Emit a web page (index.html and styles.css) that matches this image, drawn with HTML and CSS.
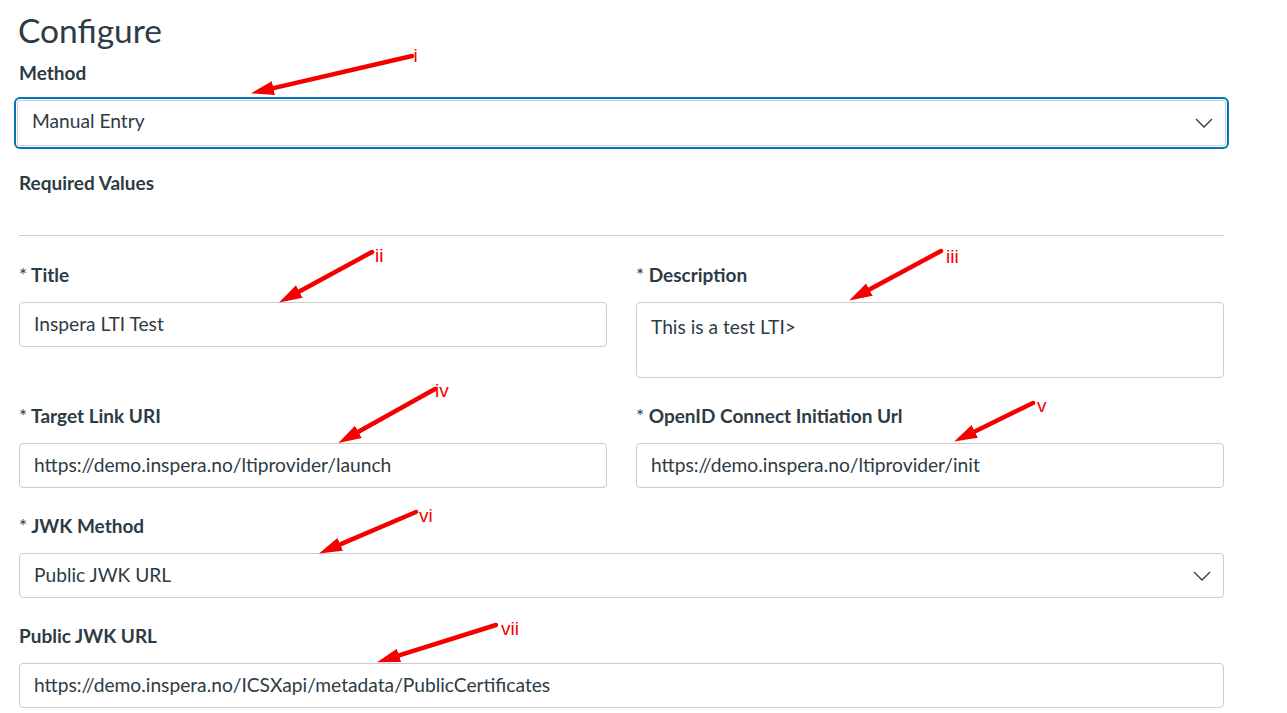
FILE: index.html
```html
<!DOCTYPE html>
<html lang="en">
<head>
<meta charset="utf-8">
<title>Configure</title>
<link rel="stylesheet" href="styles.css">
</head>
<body>
<main class="page">
  <h1 class="title">Configure</h1>

  <div class="field">
    <label class="label">Method</label>
    <div class="select select--focus">
      <span class="value">Manual Entry</span>
      <svg class="chev" viewBox="0 0 18 10" width="18" height="10"><polyline points="1,1 9,9 17,1" fill="none" stroke="#2d3b45" stroke-width="1.3"/></svg>
    </div>
  </div>

  <div class="section-label">Required Values</div>
  <hr class="rule">

  <div class="grid">
    <div class="field">
      <label class="label"><span class="ast">*</span> Title</label>
      <div class="input"><span class="value">Inspera LTI Test</span></div>
    </div>
    <div class="field">
      <label class="label"><span class="ast">*</span> Description</label>
      <div class="input input--area"><span class="value">This is a test LTI&gt;</span></div>
    </div>
    <div class="field">
      <label class="label"><span class="ast">*</span> Target Link URI</label>
      <div class="input"><span class="value">https://demo.inspera.no/ltiprovider/launch</span></div>
    </div>
    <div class="field">
      <label class="label"><span class="ast">*</span> OpenID Connect Initiation Url</label>
      <div class="input"><span class="value">https://demo.inspera.no/ltiprovider/init</span></div>
    </div>
  </div>

  <div class="field">
    <label class="label"><span class="ast">*</span> JWK Method</label>
    <div class="select">
      <span class="value">Public JWK URL</span>
      <svg class="chev" viewBox="0 0 18 10" width="18" height="10"><polyline points="1,1 9,9 17,1" fill="none" stroke="#2d3b45" stroke-width="1.3"/></svg>
    </div>
  </div>

  <div class="field">
    <label class="label">Public JWK URL</label>
    <div class="input"><span class="value">https://demo.inspera.no/ICSXapi/metadata/PublicCertificates</span></div>
  </div>
</main>

<svg class="annotations" width="1287" height="713" viewBox="0 0 1287 713">
  <defs>
    <marker id="head" markerUnits="userSpaceOnUse" markerWidth="26" markerHeight="16" refX="0" refY="7" orient="auto">
      <polygon points="0,0 23,7 0,14" fill="#f40000"/>
    </marker>
  </defs>
  <g stroke="#f40000" stroke-width="4.5" stroke-linecap="round" fill="none" marker-end="url(#head)">
    <path d="M412,56 L273.4,88.1"/>
    <path d="M372,252 L299.3,291.5"/>
    <path d="M941,251 L869.4,289.6"/>
    <path d="M435,389 L358.4,431.8"/>
    <path d="M1033,403 L974.8,431.4"/>
    <path d="M416,512 L340.2,544.4"/>
    <path d="M496,625 L399,655.4"/>
  </g>
  <g class="numerals" fill="#f40000">
    <text x="413.5" y="62">i</text>
    <text x="375" y="262">ii</text>
    <text x="946" y="263">iii</text>
    <text x="435" y="397">iv</text>
    <text x="1037" y="412">v</text>
    <text x="419" y="522">vi</text>
    <text x="501" y="635">vii</text>
  </g>
</svg>
</body>
</html>
```

FILE: styles.css
```css
html, body {
  margin: 0;
  padding: 0;
  background: #ffffff;
}

body {
  font-family: Lato, "Liberation Sans", Arial, sans-serif;
  color: #2d3b45;
  width: 1287px;
  height: 713px;
  overflow: hidden;
  position: relative;
}

.page {
  width: 1205px;
  padding: 0 0 0 19px;
}

.title {
  margin: 0;
  padding-top: 9px;
  margin-left: -1px;
  font-size: 33.5px;
  font-weight: 400;
  line-height: 42px;
  height: 52px;
}

.field {
  margin-bottom: 26px;
}

.label {
  display: block;
  font-size: 19px;
  font-weight: 700;
  line-height: 24px;
  margin-bottom: 15px;
}

.ast {
  font-weight: 400;
}

.input,
.select {
  box-sizing: border-box;
  height: 45px;
  border: 1px solid #c7cdd1;
  border-radius: 4px;
  padding: 0 14px 3px 14px;
  display: flex;
  align-items: center;
  font-size: 19.2px;
  background: #fff;
}

.input--area {
  height: 76px;
  align-items: flex-start;
  padding-top: 12px;
  padding-bottom: 0;
}

.value {
  color: #2d3b45;
  white-space: nowrap;
}

.select {
  justify-content: space-between;
  padding-right: 12px;
}

.select .chev {
  margin-top: 3px;
}

.select--focus {
  margin: 0 -2px;
  height: 46px;
  padding-bottom: 5px;
  box-shadow: 0 0 0 1px #ffffff, 0 0 0 3px #0374b5;
  border-radius: 3px;
}

.chev {
  display: block;
}

.select--focus .chev {
  margin-top: 4px;
}

.section-label {
  font-size: 19px;
  font-weight: 700;
  line-height: 24px;
  margin-top: -1px;
}

.rule {
  border: 0;
  border-top: 1px solid #c7cdd1;
  margin: 40px 0 27px 0;
}

.grid {
  display: grid;
  grid-template-columns: 588px 588px;
  column-gap: 29px;
}

.annotations {
  position: absolute;
  left: 0;
  top: 0;
  pointer-events: none;
}

.numerals text {
  font-family: "Liberation Sans", Arial, sans-serif;
  font-size: 19px;
}
```
